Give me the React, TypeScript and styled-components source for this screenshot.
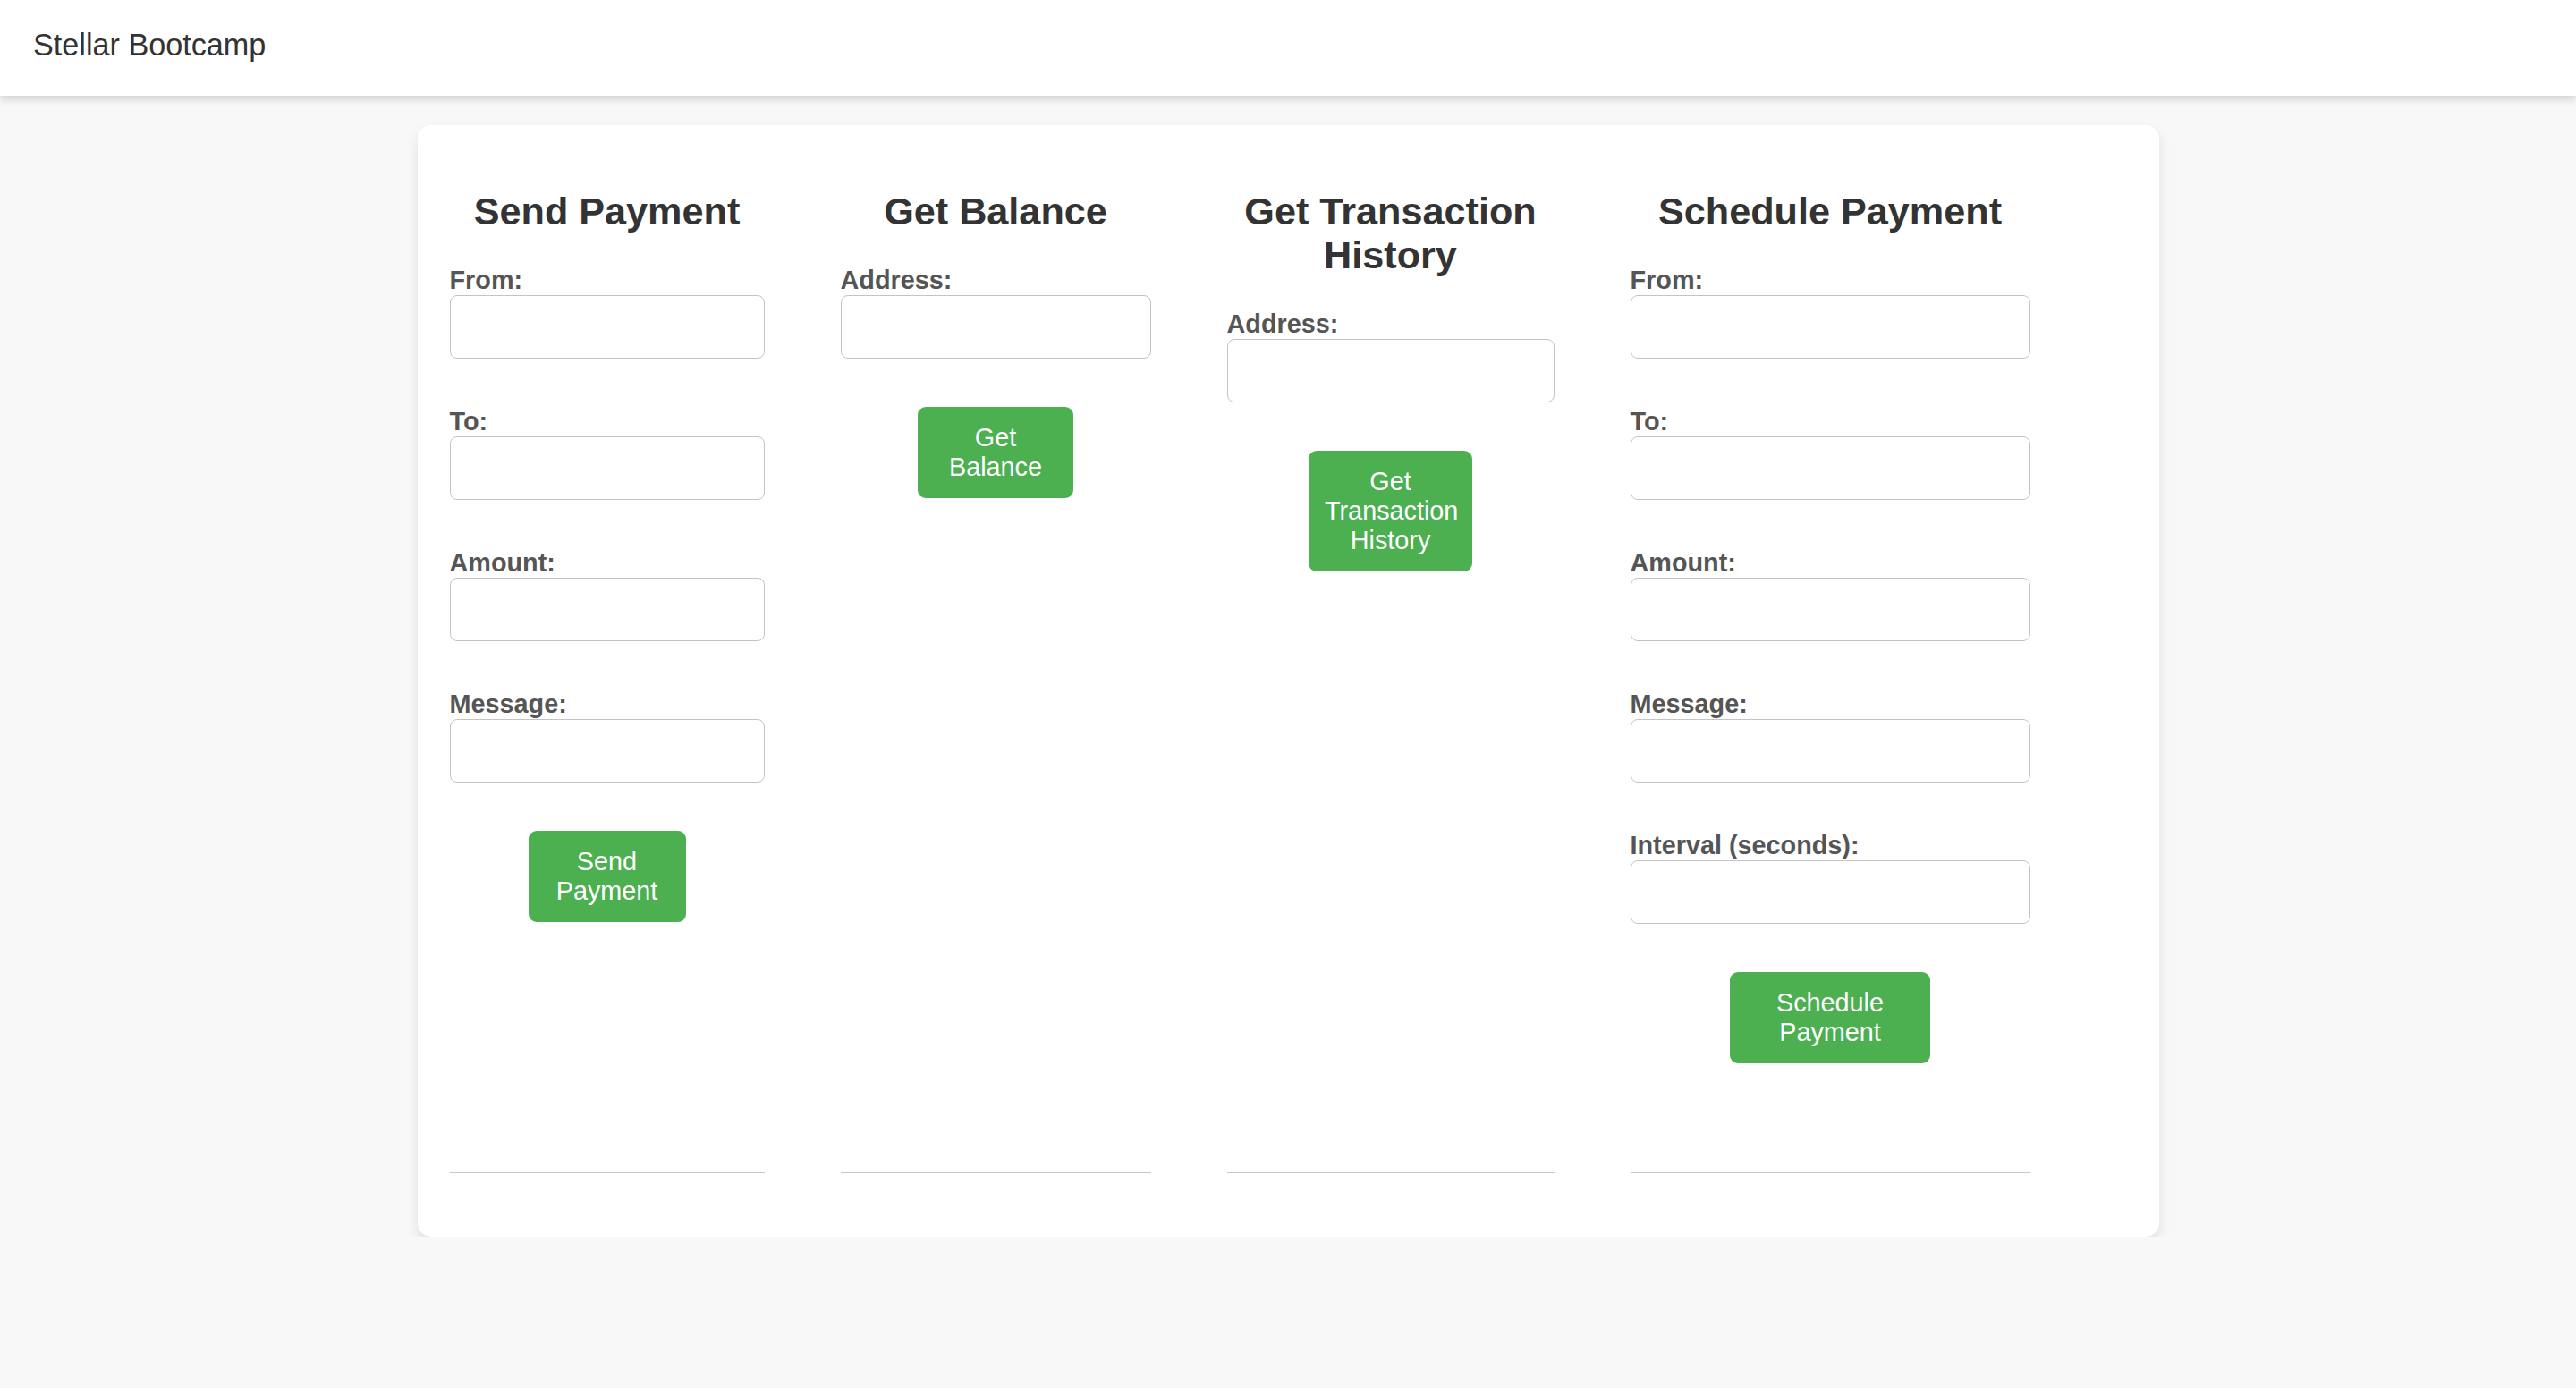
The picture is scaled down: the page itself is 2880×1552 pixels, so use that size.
import React from "react";
import styled, { createGlobalStyle } from "styled-components";

const GlobalStyle = createGlobalStyle`
  html, body {
    margin: 0;
    padding: 0;
    background: #f8f8f8;
    font-family: "Liberation Sans", Arial, sans-serif;
  }
  * { box-sizing: border-box; }
`;

const Header = styled.header`
  position: relative;
  z-index: 1;
  height: 107px;
  padding: 31px 37px 0;
  background: #ffffff;
  box-shadow: 0 4px 9px rgba(0, 0, 0, 0.16);
  color: #333333;
  font-size: 34.2px;
  line-height: normal;
`;

const Main = styled.main`
  display: flex;
  justify-content: center;
  padding-top: 33px;
`;

const Card = styled.section`
  width: 1947px;
  padding: 36px;
  background: #ffffff;
  border-radius: 15px;
  box-shadow: 0 7px 14px rgba(0, 0, 0, 0.1);
`;

const Row = styled.div`
  display: flex;
  align-items: stretch;
  gap: 85px;
`;

const Column = styled.div<{ $width: number }>`
  width: ${(p) => p.$width}px;
  display: flex;
  flex-direction: column;
`;

const Heading = styled.h2`
  margin: 36px 0;
  text-align: center;
  font-size: 43.2px;
  font-weight: 700;
  line-height: normal;
  color: #333333;
`;

const Field = styled.div`
  display: flex;
  flex-direction: column;
  margin-bottom: 54px;
`;

const Label = styled.label`
  display: block;
  font-size: 28.8px;
  font-weight: 700;
  line-height: normal;
  color: #555555;
`;

const Input = styled.input`
  width: 100%;
  height: 71px;
  border: 1px solid #c4c4c4;
  border-radius: 8px;
  background: #ffffff;
  padding: 0 16px;
  font-size: 28.8px;
  font-family: inherit;
  outline: none;
`;

const ActionButton = styled.button`
  align-self: center;
  width: 50%;
  padding: 18px;
  margin-bottom: 121px;
  border: none;
  border-radius: 9px;
  background: #4caf50;
  color: #ffffff;
  font-family: inherit;
  font-size: 28.8px;
  line-height: normal;
  text-align: center;
  cursor: pointer;
`;

const Divider = styled.div`
  margin-top: auto;
  margin-bottom: 35px;
  height: 2px;
  background: #c8c8c8;
`;

type Section = {
  title: string;
  width: number;
  fields: string[];
  action: string;
};

const sections: Section[] = [
  { title: "Send Payment", width: 352, fields: ["From:", "To:", "Amount:", "Message:"], action: "Send Payment" },
  { title: "Get Balance", width: 347, fields: ["Address:"], action: "Get Balance" },
  { title: "Get Transaction History", width: 366, fields: ["Address:"], action: "Get Transaction History" },
  {
    title: "Schedule Payment",
    width: 447,
    fields: ["From:", "To:", "Amount:", "Message:", "Interval (seconds):"],
    action: "Schedule Payment",
  },
];

export default function App() {
  return (
    <>
      <GlobalStyle />
      <Header>Stellar Bootcamp</Header>
      <Main>
        <Card>
          <Row>
            {sections.map((s) => (
              <Column key={s.title} $width={s.width}>
                <Heading>{s.title}</Heading>
                {s.fields.map((f) => (
                  <Field key={f}>
                    <Label>{f}</Label>
                    <Input type="text" />
                  </Field>
                ))}
                <ActionButton>{s.action}</ActionButton>
                <Divider />
              </Column>
            ))}
          </Row>
        </Card>
      </Main>
    </>
  );
}
